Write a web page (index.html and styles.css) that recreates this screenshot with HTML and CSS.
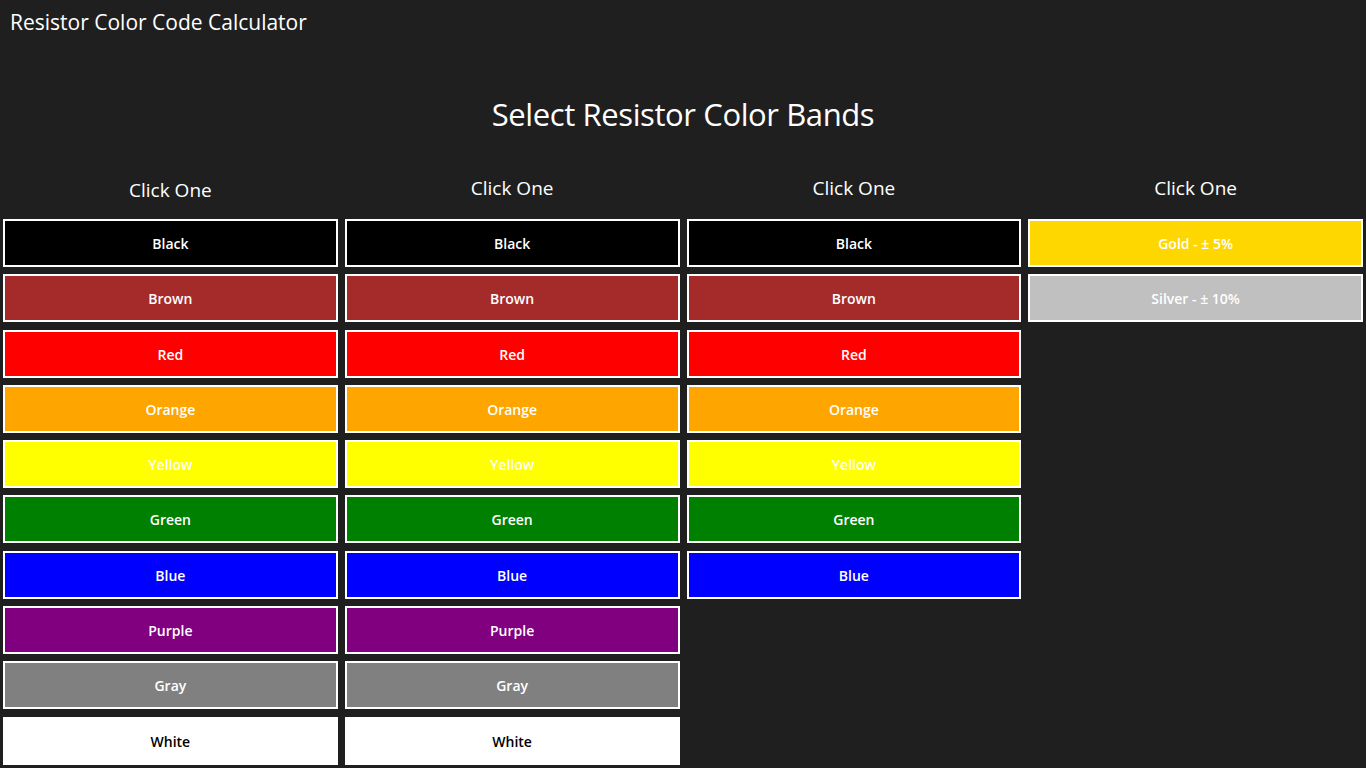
FILE: index.html
```html
<!DOCTYPE html>
<html lang="en">
<head>
<meta charset="utf-8">
<title>Resistor Color Code Calculator</title>
<link rel="stylesheet" href="styles.css">
</head>
<body>
<div class="app">
  <div class="app-title">Resistor Color Code Calculator</div>
  <h1 class="page-heading">Select Resistor Color Bands</h1>
  <div class="columns">
    <div class="col">
      <div class="col-header col-header--first">Click One</div>
      <div class="bands">
        <button class="band band-black">Black</button>
        <button class="band band-brown">Brown</button>
        <button class="band band-red">Red</button>
        <button class="band band-orange">Orange</button>
        <button class="band band-yellow">Yellow</button>
        <button class="band band-green">Green</button>
        <button class="band band-blue">Blue</button>
        <button class="band band-purple">Purple</button>
        <button class="band band-gray">Gray</button>
        <button class="band band-white">White</button>
      </div>
    </div>
    <div class="col">
      <div class="col-header">Click One</div>
      <div class="bands">
        <button class="band band-black">Black</button>
        <button class="band band-brown">Brown</button>
        <button class="band band-red">Red</button>
        <button class="band band-orange">Orange</button>
        <button class="band band-yellow">Yellow</button>
        <button class="band band-green">Green</button>
        <button class="band band-blue">Blue</button>
        <button class="band band-purple">Purple</button>
        <button class="band band-gray">Gray</button>
        <button class="band band-white">White</button>
      </div>
    </div>
    <div class="col">
      <div class="col-header">Click One</div>
      <div class="bands">
        <button class="band band-black">Black</button>
        <button class="band band-brown">Brown</button>
        <button class="band band-red">Red</button>
        <button class="band band-orange">Orange</button>
        <button class="band band-yellow">Yellow</button>
        <button class="band band-green">Green</button>
        <button class="band band-blue">Blue</button>
      </div>
    </div>
    <div class="col">
      <div class="col-header">Click One</div>
      <div class="bands">
        <button class="band band-gold">Gold - ± 5%</button>
        <button class="band band-silver">Silver - ± 10%</button>
      </div>
    </div>
  </div>
</div>
</body>
</html>
```
FILE: styles.css
```css
html, body {
  margin: 0;
  padding: 0;
  background: #1f1f1f;
  height: 100%;
  overflow: hidden;
}

body {
  font-family: "Open Sans", "Noto Sans", sans-serif;
  color: #ffffff;
}

.app {
  width: 1366px;
  height: 768px;
}

.app-title {
  box-sizing: border-box;
  padding: 1px 0 0 10px;
  font-size: 21px;
  line-height: 42px;
  height: 43px;
}

.page-heading {
  margin: 49px 0 0;
  font-size: 31px;
  font-weight: 400;
  line-height: 44px;
  height: 44px;
  text-align: center;
  letter-spacing: -0.4px;
}

.columns {
  display: grid;
  grid-template-columns: repeat(4, 1fr);
  column-gap: 7px;
  padding: 0 3px;
  margin-top: 38px;
}

.col {
  display: flex;
  flex-direction: column;
}

.col-header {
  box-sizing: border-box;
  height: 45px;
  font-size: 19px;
  line-height: 28px;
  text-align: center;
}

.col-header--first {
  padding-top: 2px;
}

.bands {
  display: flex;
  flex-direction: column;
  row-gap: 7.3px;
}

.band {
  box-sizing: border-box;
  height: 48px;
  margin: 0;
  padding: 1px 0 0;
  border: 2px solid #ffffff;
  font-family: inherit;
  font-size: 14px;
  font-weight: 600;
  color: #ffffff;
  text-align: center;
  cursor: pointer;
}

.band-black { background: #000000; }
.band-brown { background: #a52a2a; }
.band-red { background: #ff0000; }
.band-orange { background: #ffa500; }
.band-yellow { background: #ffff00; }
.band-green { background: #008000; }
.band-blue { background: #0000ff; }
.band-purple { background: #800080; }
.band-gray { background: #808080; }
.band-white { background: #ffffff; color: #000000; }
.band-gold { background: #ffd700; }
.band-silver { background: #c0c0c0; }
```
